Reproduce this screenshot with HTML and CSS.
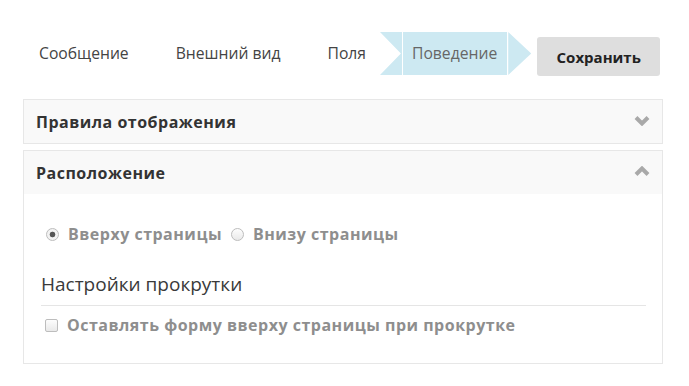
FILE: index.html
```html
<!DOCTYPE html>
<html lang="ru">
<head>
    <meta charset="UTF-8">
    <title>Поведение формы</title>
    <meta name="viewport" content="width=device-width, initial-scale=1.0">
    <link rel="stylesheet" href="styles.css">
</head>
<body>
<div class="app">
    <div class="toolbar">
        <div class="steps">
            <div class="step">Сообщение</div>
            <div class="step">Внешний вид</div>
            <div class="step">Поля</div>
            <div class="step active">
                <span class="notch"></span>
                <span class="label">Поведение</span>
                <span class="arrow"></span>
            </div>
        </div>
        <button class="save">Сохранить</button>
    </div>

    <div class="panel">
        <div class="panel-head">
            <span>Правила отображения</span>
            <svg class="chevron" width="16" height="11" viewBox="0 0 16 11">
                <polyline points="2,2.5 8,8.5 14,2.5" fill="none" stroke="#a9a9a9" stroke-width="4"/>
            </svg>
        </div>
    </div>

    <div class="panel">
        <div class="panel-head">
            <span>Расположение</span>
            <svg class="chevron" width="16" height="11" viewBox="0 0 16 11">
                <polyline points="2,8.5 8,2.5 14,8.5" fill="none" stroke="#a9a9a9" stroke-width="4"/>
            </svg>
        </div>
        <div class="panel-body">
            <div class="choices">
                <label><input type="radio" name="pos" checked> Вверху страницы</label>
                <label><input type="radio" name="pos"> Внизу страницы</label>
            </div>
            <h3 class="section">Настройки прокрутки</h3>
            <div class="choices">
                <label><input type="checkbox"> Оставлять форму вверху страницы при прокрутке</label>
            </div>
        </div>
    </div>
</div>
</body>
</html>
```

FILE: styles.css
```css
body {
    margin: 0;
    background: white;
    font-family: "Open Sans", "Liberation Sans", sans-serif;
    color: #333;
}

.app {
    width: 640px;
    margin-left: 23px;
    display: flex;
    flex-direction: column;
    gap: 6px;
}

.toolbar {
    display: flex;
    align-items: flex-start;
    padding-top: 32px;
    height: 61px;
    margin-left: -8px;
}

.steps {
    display: flex;
    height: 43px;
}

.step {
    padding: 0 23px 0 24px;
    line-height: 43px;
    font-size: 15.7px;
    color: #444;
}

.step.active {
    display: flex;
    padding: 0;
    margin-left: -9px;
    gap: 1px;
    color: #666;
}

.notch {
    width: 22px;
    background: #cde9f2;
    clip-path: polygon(0 0, 100% 0, 100% 100%, 0 100%, 95% 50%);
}

.label {
    background: #cde9f2;
    padding: 0 10px 0 9px;
}

.arrow {
    width: 23px;
    background: #cde9f2;
    clip-path: polygon(0 0, 100% 50%, 0 100%);
}

.save {
    margin: 5px 0 0 6px;
    width: 123px;
    height: 39px;
    border: none;
    border-radius: 3px;
    background: #dedede;
    font-family: inherit;
    font-size: 15px;
    font-weight: bold;
    color: #222;
}

.panel {
    border: 1px solid #e7e7e7;
}

.panel-head {
    display: flex;
    justify-content: space-between;
    align-items: center;
    height: 43px;
    padding: 0 12px 0 12px;
    background: #f9f9f9;
    font-size: 16px;
    letter-spacing: 0.5px;
    font-weight: bold;
    color: #333;
}

.chevron {
    margin-top: -3px;
}

.panel-body {
    padding: 28px 16px 26px 17px;
}

.choices {
    display: flex;
    gap: 9px;
    line-height: 24px;
    padding-left: 5px;
}

.choices label {
    display: flex;
    align-items: center;
    gap: 4px;
    font-size: 16px;
    letter-spacing: 0.5px;
    font-weight: bold;
    color: #8e8e8e;
}

.choices input {
    appearance: none;
    margin: 0 5px 0 0;
    width: 13px;
    height: 13px;
    border: 1px solid #bdbdbd;
    background: linear-gradient(#fdfdfd, #e9e9e9);
}

.choices input[type="radio"] {
    border-radius: 50%;
}

.choices input[type="radio"]:checked {
    background: radial-gradient(circle, #555 0, #555 2.5px, #f2f2f2 3.2px);
}

.choices input[type="checkbox"] {
    border-radius: 2px;
    margin-left: -1px;
}

.section {
    margin: 25px 0 7px;
    padding-bottom: 8px;
    border-bottom: 1px solid #e5e5e5;
    font-size: 19px;
    font-weight: normal;
    line-height: 26px;
    color: #3a3a3a;
}
```
